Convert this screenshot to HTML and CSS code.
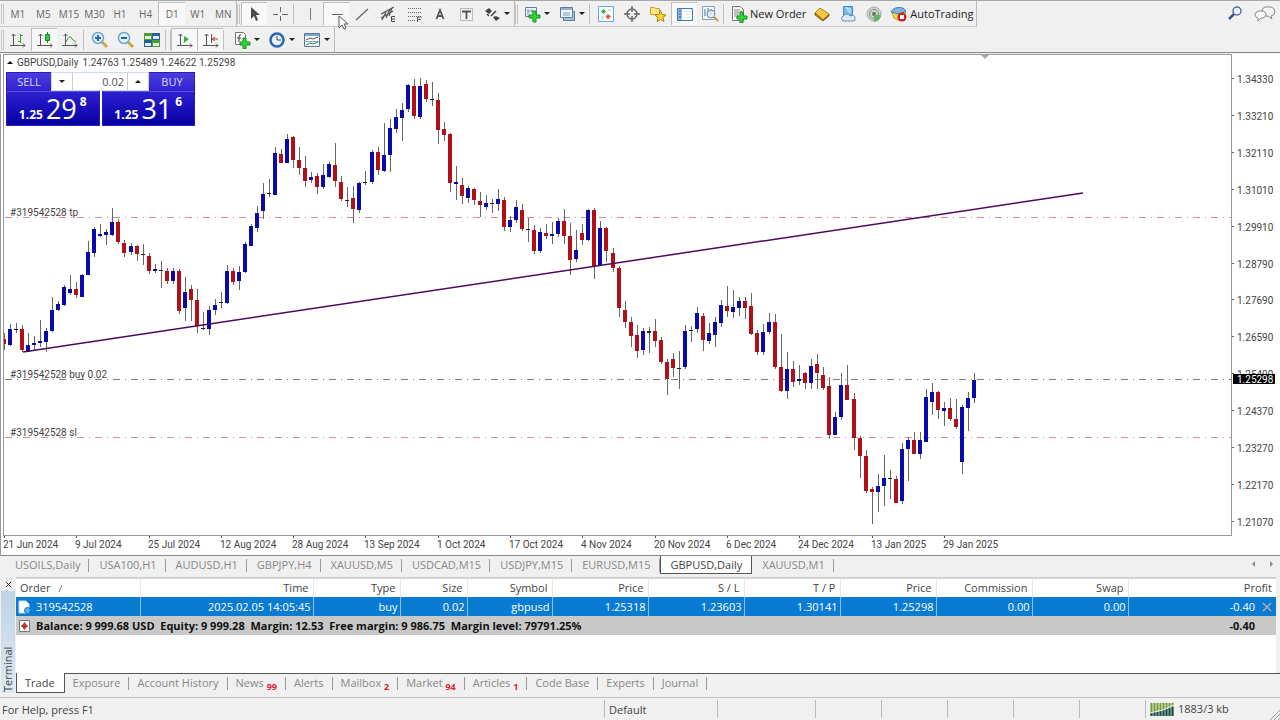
FILE: index.html
```html
<!DOCTYPE html>
<html lang="en">
<head>
<meta charset="utf-8">
<title>GBPUSD,Daily</title>
<link rel="stylesheet" href="styles.css">
</head>
<body>
<svg class="pointer" width="12" height="18" viewBox="0 0 12 18" aria-hidden="true"><path d="M1 1v12l3-3 2 4 2-1-2-4h4z" fill="#fff" stroke="#555" stroke-width="1"/></svg>

<header class="toolbars">
  <div class="toolbar">
    <div class="group frames">
      <span class="grip"></span>
      <button>M1</button><button>M5</button><button>M15</button><button>M30</button><button>H1</button><button>H4</button><button class="pressed">D1</button><button>W1</button><button>MN</button>
    </div>
    <div class="group">
      <span class="grip"></span>
      <button class="tool pressed" aria-label="Cursor"><svg width="18" height="18"><path d="M5 2v12l3-3 2 5 2-1-2-5h4z" fill="#4a4a4a"/></svg></button>
      <button class="tool" aria-label="Crosshair"><svg width="18" height="18"><path d="M9.500 2v5M9.500 11v5M2 9.500h5M11 9.500h6" stroke="#666" fill="none"/></svg></button>
      <span class="sep"></span>
      <button class="tool" aria-label="Vertical line"><svg width="18" height="18"><path d="M9.500 3v12" stroke="#777" fill="none"/></svg></button>
      <button class="tool pressed" aria-label="Horizontal line"><svg width="18" height="18"><path d="M4 9.500h11" stroke="#666" fill="none"/></svg></button>
      <button class="tool" aria-label="Trendline"><svg width="18" height="18"><path d="M3 15L15 4" stroke="#666" stroke-width="1.300" fill="none"/></svg></button>
      <button class="tool" aria-label="Equidistant channel"><svg width="18" height="18"><path d="M2 9L15 2M2 13L14 6M3 15l4-8M7 13l4-9M10 11l3-8" stroke="#555" stroke-width="1.200" fill="none"/><path d="M16 11.500h-3.500v5H16M13 14h3" stroke="#444" fill="none"/></svg></button>
      <button class="tool" aria-label="Fibonacci"><svg width="18" height="18"><path d="M3 3.500h13M3 7.500h13M3 11.500h13M3 15.500h8" stroke="#666" stroke-dasharray="1 1" fill="none"/><path d="M12.500 17v-5h4M12.500 14.500h3" stroke="#555" fill="none"/></svg></button>
      <button class="tool" aria-label="Text"><svg width="18" height="18"><path d="M5.500 14L9 5L12.500 14M7 11h4" stroke="#555" stroke-width="1.800" fill="none"/></svg></button>
      <button class="tool" aria-label="Text label"><svg width="18" height="18"><path d="M3.500 3.500h12v12h-12z" stroke="#888" stroke-dasharray="1 1" fill="none"/><path d="M5 6.500h9M9.500 6v8" stroke="#555" stroke-width="1.800" fill="none"/></svg></button>
      <button class="tool drop" aria-label="Arrows"><svg width="18" height="18"><path d="M2 6l4-3 3 3-3 3zM10 12l3-1 4 2-4 3z" fill="#444"/><path d="M4 9l2 2M8 11l5-5" stroke="#444" stroke-width="1.500" fill="none"/></svg><i class="caret"></i></button>
    </div>
    <div class="group standard">
      <span class="grip"></span>
      <button class="tool drop" aria-label="New chart"><svg width="18" height="18"><path d="M2.500 2.500h11v9h-11z" fill="#eef5fb" stroke="#5b87ad"/><path d="M5 4v6M4 6h6M9 4v4" stroke="#7b9cba" fill="none"/><path d="M10 6h3v4h4v3h-4v4h-3v-4H6v-3h4z" fill="#35d53c" stroke="#14921a"/></svg><i class="caret"></i></button>
      <button class="tool drop" aria-label="Profiles"><svg width="18" height="18"><path d="M5.500 6.500h11v9h-11z" fill="#a8c4dd" stroke="#5b7fa3"/><path d="M2.500 2.500h12v10h-12z" fill="#eef5fb" stroke="#5b7fa3"/><path d="M3 3h11v2H3z" fill="#8fb2d4"/><path d="M5 8h7M5 10h7" stroke="#7b9cba" fill="none"/></svg><i class="caret"></i></button>
      <span class="sep"></span>
      <button class="tool" aria-label="Market Watch"><svg width="18" height="18"><path d="M1.500 1.500h15v15h-15z" fill="#f8fcff" stroke="#69a9d6"/><path d="M4 6.500L6.500 4 9 6.500 6.500 9z" fill="#3cae3c"/><path d="M8.500 11.500L11 9l3 2.500-3 3z" fill="#e0603c"/><path d="M11 5h3M4 12h3M4 14h2" stroke="#b5cbd6" fill="none"/></svg></button>
      <button class="tool" aria-label="Data Window"><svg width="18" height="18"><circle cx="9" cy="9" r="5" fill="none" stroke="#666" stroke-width="1.500"/><path d="M9 1v6M9 11v6M1 9h6M11 9h6" stroke="#666" stroke-width="1.500" fill="none"/></svg></button>
      <button class="tool" aria-label="Navigator"><svg width="18" height="18"><path d="M1.500 2.500h4l1 1h4v6h-9z" fill="#fbe58a" stroke="#c9a227"/><path d="M11.500 5.500l1.500 4 4 .5-3 2.500 1 4-3.500-2-3.500 2 1-4-3-2.500 4-.5z" fill="#ffd530" stroke="#a98512"/></svg></button>
      <button class="tool pressed" aria-label="Terminal"><svg width="18" height="18"><path d="M1.500 3.500h15v12h-15z" fill="#fff" stroke="#3f78b5"/><path d="M2 4h4v11H2z" fill="#8fbbe4"/><path d="M3 6h2M3 9h2M3 12h2" stroke="#174f8b" fill="none"/><path d="M8 6.500h7M8 9.500h7M8 12.500h7" stroke="#dce9f5" fill="none"/></svg></button>
      <button class="tool" aria-label="Strategy Tester"><svg width="18" height="18"><path d="M1.500 1.500h12v13h-12z" fill="#f0f5fa" stroke="#8aa0b5"/><path d="M4 4v7M7 3v6M10 4v6" stroke="#4776a4" fill="none"/><circle cx="10" cy="9" r="4" fill="#dcebf7" fill-opacity=".8" stroke="#6d8ba8"/><path d="M13 12l4 4" stroke="#c6a13b" stroke-width="2"/></svg></button>
      <span class="sep"></span>
      <button class="tool label" aria-label="New Order"><svg width="18" height="18"><path d="M2.500 1.500h8l3 3v11h-11z" fill="#fafafa" stroke="#777"/><path d="M4 5h6M4 7h8M4 9h5M4 11h4" stroke="#888" fill="none"/><path d="M10 7h3v4h4v3h-4v4h-3v-4H7v-3h3z" fill="#35d53c" stroke="#14921a"/></svg><span>New Order</span></button>
      <button class="tool" aria-label="MetaEditor"><svg width="18" height="18"><path d="M2 8l5-5 9 6-6 6z" fill="#f6c945" stroke="#b0801a"/><path d="M2 8v2l8 6 6-5V9l-6 6z" fill="#c68e1c" stroke="#8d6413"/></svg></button>
      <button class="tool" aria-label="Virtual hosting"><svg width="18" height="18"><path d="M4.500 1.500h9v9h-9z" fill="#74b9ea" stroke="#3b8cc8"/><path d="M6 3h3v4M11 3v5" stroke="#e8f5ff" fill="none"/><path d="M4 16a3 3 0 0 1 0-5q4-4 7 0 5-2 5 2 1 3-2 3z" fill="#dfe9f3" stroke="#6f8eab"/></svg></button>
      <button class="tool" aria-label="Signals"><svg width="18" height="18"><circle cx="9" cy="9" r="7" fill="#cdd3cd" stroke="#aaa"/><circle cx="9" cy="9" r="4.500" fill="none" stroke="#879087"/><circle cx="9" cy="9" r="2" fill="#5b7b5b"/><path d="M9 10v7a8 8 0 0 0 7-7" fill="#68b26b"/></svg></button>
      <button class="tool label" aria-label="AutoTrading"><svg width="18" height="18"><path d="M2 7h14l-6 9-6-3z" fill="#f6d34c" stroke="#c49a24"/><path d="M1 7q3-6 12-4l3 3-7 3z" fill="#7db7df" stroke="#3f7fae"/><circle cx="12" cy="12" r="4.500" fill="#cf1f1f"/><path d="M10 10h4v4h-4z" fill="#fff"/></svg><span>AutoTrading</span></button>
    </div>
    <div class="corner">
      <button class="tool" aria-label="Search"><svg width="18" height="18"><circle cx="11" cy="6" r="4" fill="#eef4ff" stroke="#4c6fae" stroke-width="1.500"/><path d="M8 9l-5 5" stroke="#3355a0" stroke-width="2.500"/></svg></button>
      <button class="tool" aria-label="Chat"><svg width="22" height="18"><path d="M11 2h6q4 1 4 4.500T17 11l1 3-4-3h-3q-3-1-3-4.500T11 2z" fill="#f4f4f4" stroke="#888"/><path d="M5 6h4q3 1 3 3.500T9 13H7l-3 3V13q-3-1-3-3.500T5 6z" fill="#fafafa" stroke="#888"/></svg></button>
    </div>
  </div>

  <div class="toolbar">
    <div class="group charts">
      <span class="grip"></span>
      <button class="tool" aria-label="Bar chart"><svg width="18" height="18"><path d="M4.500 3v12M1 14.500h15M2.500 5l2-2 2 2M14 12.500l2 2-2 2" stroke="#555" fill="none"/><path d="M11.500 3v9M9 10.500h2M12 4.500h2" stroke="#3a9a3a" fill="none"/></svg></button>
      <button class="tool pressed" aria-label="Candlesticks"><svg width="18" height="18"><path d="M4.500 3v12M1 14.500h15M2.500 5l2-2 2 2M14 12.500l2 2-2 2" stroke="#555" fill="none"/><path d="M11.500 1v11" stroke="#287c28"/><path d="M9.500 3.500h4v6h-4z" fill="#2fd03c" stroke="#1c8b25"/></svg></button>
      <button class="tool" aria-label="Line chart"><svg width="18" height="18"><path d="M4.500 3v12M1 14.500h15M2.500 5l2-2 2 2M14 12.500l2 2-2 2" stroke="#555" fill="none"/><path d="M5 11q4-9 6-3l4 3" stroke="#3a9a3a" fill="none"/></svg></button>
      <span class="sep"></span>
      <button class="tool" aria-label="Zoom in"><svg width="18" height="18"><path d="M11 11l5 5" stroke="#cfa83b" stroke-width="3"/><circle cx="7" cy="7" r="5.500" fill="#e2f1fb" stroke="#6fa5d2" stroke-width="1.500"/><path d="M4 7h6M7 4v6" stroke="#2567a8" stroke-width="2"/></svg></button>
      <button class="tool" aria-label="Zoom out"><svg width="18" height="18"><path d="M11 11l5 5" stroke="#cfa83b" stroke-width="3"/><circle cx="7" cy="7" r="5.500" fill="#e2f1fb" stroke="#6fa5d2" stroke-width="1.500"/><path d="M4 7h6" stroke="#2567a8" stroke-width="2"/></svg></button>
      <button class="tool" aria-label="Tile windows"><svg width="18" height="18"><path d="M1 2h8v7H1zM9 9h8v7H9z" fill="#4a9d2e"/><path d="M9 2h8v7H9zM1 9h8v7H1z" fill="#2a5ca0"/><path d="M2 5h6v3H2zM10 5h6v3h-6zM2 12h6v3H2zM10 12h6v3h-6z" fill="#e0f0e4"/></svg></button>
      <span class="sep wide"></span>
      <button class="tool pressed" aria-label="Auto scroll"><svg width="18" height="18"><path d="M4.500 3v12M1 14.500h15M2.500 5l2-2 2 2M14 12.500l2 2-2 2" stroke="#555" fill="none"/><path d="M8 5l5 3-5 4z" fill="#2fb53c"/></svg></button>
      <button class="tool pressed" aria-label="Chart shift"><svg width="18" height="18"><path d="M4.500 3v12M1 14.500h15M2.500 5l2-2 2 2M14 12.500l2 2-2 2M9.500 3v9" stroke="#555" fill="none"/><path d="M16 8h-5M13 6l-3 2 3 2" stroke="#b03a2a" fill="none"/></svg></button>
      <span class="sep wide single"></span>
      <button class="tool drop" aria-label="Indicators"><svg width="18" height="18"><path d="M2.500 1.500h8l2 2v10h-10z" fill="#fafafa" stroke="#777"/><path d="M8 4q-2-1-2 2v5M4 7h4" stroke="#444" fill="none"/><path d="M10 7h3v4h4v3h-4v4h-3v-4H7v-3h3z" fill="#35d53c" stroke="#14921a"/></svg><i class="caret"></i></button>
      <button class="tool drop" aria-label="Periods"><svg width="18" height="18"><circle cx="9" cy="9" r="6.500" fill="#e6f2fc" stroke="#2b67ae" stroke-width="2.500"/><path d="M9 5v4h4" stroke="#444" fill="none"/></svg><i class="caret"></i></button>
      <button class="tool drop" aria-label="Templates"><svg width="18" height="18"><path d="M1.500 2.500h15v13h-15z" fill="#f7fbff" stroke="#56799d"/><path d="M2 3h14v2H2z" fill="#7fa8d0"/><path d="M3 9l4-2 3 1 5-2" stroke="#555" fill="none"/><path d="M2 10.500h14" stroke="#8aa9c8"/><path d="M3 14l4-2 3 1 5-2" stroke="#3a8d3a" fill="none"/></svg><i class="caret"></i></button>
    </div>
  </div>
</header>

<main class="window">
  <section class="plot">
    <svg class="canvas" id="plot" width="100%" height="480" role="img" aria-label="GBPUSD daily candlestick chart"></svg>
    <div class="quote"><i class="up"></i><span>GBPUSD,Daily</span><span>1.24763 1.25489 1.24622 1.25298</span></div>
    <div class="deal">
      <button class="side sell"><span class="verb">SELL</span><span class="price"><small>1.25</small><b>29</b><sup>8</sup></span></button>
      <button class="side buy"><span class="verb">BUY</span><span class="price"><small>1.25</small><b>31</b><sup>6</sup></span></button>
      <div class="volume">
        <button aria-label="Decrease volume"><i class="caret"></i></button>
        <input type="text" value="0.02" aria-label="Volume">
        <button aria-label="Increase volume"><i class="up"></i></button>
      </div>
    </div>
  </section>
  <svg class="canvas" id="prices" width="48" height="480" role="img" aria-label="Price scale"></svg>
  <svg class="canvas dates" id="dates" width="100%" height="19" role="img" aria-label="Time scale"></svg>
</main>

<nav class="tabs sheets">
  <button>USOILS,Daily</button><button>USA100,H1</button><button>AUDUSD,H1</button><button>GBPJPY,H4</button><button>XAUUSD,M5</button><button>USDCAD,M15</button><button>USDJPY,M15</button><button>EURUSD,M15</button><button class="active">GBPUSD,Daily</button><button>XAUUSD,M1</button>
  <span class="scroll"><i class="left"></i><i class="right"></i></span>
</nav>

<section class="terminal">
  <aside class="spine">
    <button aria-label="Close"><svg width="7" height="7"><path d="M1 1l5 5M6 1L1 6" stroke="#333" fill="none"/></svg></button>
    <span>Terminal</span>
  </aside>
  <div class="pane">
    <table>
      <colgroup><col class="c-order"><col class="c-time"><col class="c-type"><col class="c-size"><col class="c-symbol"><col class="c-num"><col class="c-num"><col class="c-num"><col class="c-num"><col class="c-num"><col class="c-num"><col></colgroup>
      <thead>
        <tr><th>Order <svg width="5" height="7"><path d="M1 7L4 0" stroke="#888" fill="none"/></svg></th><th>Time</th><th>Type</th><th>Size</th><th>Symbol</th><th>Price</th><th>S / L</th><th>T / P</th><th>Price</th><th>Commission</th><th>Swap</th><th>Profit</th></tr>
      </thead>
      <tbody>
        <tr class="order"><td><span class="lead"><svg width="13" height="14"><path d="M1 1h7l3 3v9H1z" fill="#fff" stroke="#cde"/><circle cx="9.500" cy="10.500" r="3" fill="#4db5ef" stroke="#1d6ca8"/></svg>319542528</span></td><td>2025.02.05 14:05:45</td><td>buy</td><td>0.02</td><td>gbpusd</td><td>1.25318</td><td>1.23603</td><td>1.30141</td><td>1.25298</td><td>0.00</td><td>0.00</td><td><span class="profit">-0.40<button aria-label="Close order"><svg width="10" height="10"><path d="M1 1l8 8M9 1L1 9" stroke="#b9a9a4" stroke-width="1.500" fill="none"/></svg></button></span></td></tr>
        <tr class="balance"><td colspan="11"><span class="lead"><svg width="13" height="14"><path d="M1.500 1.500h10v11h-10z" fill="#fff" stroke="#777"/><path d="M6.500 3l3 4-3 4-3-4z" fill="#c33"/><path d="M3 7h7" stroke="#833"/></svg><span>Balance: 9 999.68 USD&nbsp; Equity: 9 999.28&nbsp; Margin: 12.53&nbsp; Free margin: 9 986.75&nbsp; Margin level: 79791.25%</span></span></td><td><span class="profit total">-0.40</span></td></tr>
      </tbody>
    </table>
    <nav class="tabs panels">
      <button class="active">Trade</button><button>Exposure</button><button>Account History</button><button>News <em>99</em></button><button>Alerts</button><button>Mailbox <em>2</em></button><button>Market <em>94</em></button><button>Articles <em>1</em></button><button>Code Base</button><button>Experts</button><button>Journal</button>
    </nav>
  </div>
</section>

<footer class="status">
  <span class="help">For Help, press F1</span>
  <span class="cell w-profile">Default</span>
  <span class="cell w-date"></span>
  <span class="cell w-open"></span>
  <span class="cell w-open"></span>
  <span class="cell w-open"></span>
  <span class="cell w-open"></span>
  <span class="cell w-open"></span>
  <span class="cell traffic"><svg width="24" height="13"><path d="M1.500 0v13M4.500 0v13M7.500 0v13M10.500 0v13M13.500 0v13M16.500 0v13M19.500 0v13M22.500 0v13" stroke="#6f9a2c" stroke-width="2"/><path d="M1.500 10v3M4.500 9v4M7.500 9v4M10.500 8v5M13.500 7v6M16.500 6v7M19.500 5v8M22.500 4v9" stroke="#1d4960" stroke-width="2"/><path d="M0 10Q14 8 24 2" stroke="#eee" fill="none"/></svg>1883/3 kb</span>
  <svg class="resize" width="10" height="10"><path d="M0 10L10 0M4 10l6-6M8 10l2-2" stroke="#999" fill="none"/></svg>
</footer>
<script src="chart.js"></script>
</body>
</html>
```
FILE: styles.css
```css
* { box-sizing: border-box; }
body {
  margin: 0;
  min-height: 100vh;
  display: flex;
  flex-direction: column;
  background: #f0f0f0;
  color: #444;
  font-family: "Open Sans", "Noto Sans", sans-serif;
  font-size: 11px;
  line-height: 16px;
}
button { margin: 0; padding: 0; border: 0; background: none; color: inherit; font: inherit; }
svg { display: block; flex: none; }
.pointer { position: absolute; left: 338px; top: 15px; z-index: 2; }

/* toolbars */
.toolbars { border-top: 1px solid #a8a8a8; border-bottom: 1px solid #8c8488; }
.toolbar { display: flex; height: 26px; }
.toolbar + .toolbar { height: 25px; }
.group { display: flex; align-items: center; border-right: 1px solid #bbb; border-bottom: 1px solid #ccc; }
.group.charts { padding-left: 1px; border-bottom: 0; }
.grip { flex: none; width: 3px; height: 20px; margin-right: 1px; border: solid #c4c4c4; border-width: 0 1px; }
.frames { flex: none; width: 237px; padding-left: 1px; font-size: 10px; color: #666; }
.frames button { flex: 1; height: 23px; }
.tool { flex: none; width: 26px; height: 23px; display: flex; align-items: center; justify-content: center; }
.pressed { background: #f8f8f8; border: solid #bdbdbd; border-width: 1px 0 0 1px; }
.drop { width: 35px; justify-content: flex-start; padding-left: 4px; gap: 3px; }
.label { width: auto; padding: 0 3px; gap: 2px; color: #222; }
.sep { flex: none; width: 4px; height: 20px; border-left: 1px solid #c0c0c0; }
.sep.wide { width: 6px; border-right: 1px solid #c0c0c0; }
.sep.single { border-right: 0; }
.corner { display: flex; align-items: center; gap: 4px; margin-left: auto; padding-right: 2px; }
.caret, .up { flex: none; width: 0; height: 0; border: 3px solid transparent; }
.caret { border-top-color: #222; border-bottom: 0; }
.up { border-bottom-color: #111; border-top: 0; }

/* chart window */
.window {
  display: grid;
  grid-template-columns: 1fr 48px;
  margin-top: 1px;
  padding-left: 2px;
  border-left: 1px solid #999;
  border-bottom: 1px solid #888;
  background: #fff;
}
.plot { position: relative; border: 1px solid #999; overflow: hidden; }
.canvas, .quote { font-family: Roboto, "Noto Sans", sans-serif; font-size: 10px; }
.canvas { fill: #444; }
.dates { grid-column: 1 / -1; }
.quote { position: absolute; left: 3px; top: 1px; display: flex; align-items: center; gap: 4px; line-height: 13px; }
.deal { position: absolute; left: 2px; top: 17px; width: 189px; display: grid; grid-template-columns: 1fr 1fr; gap: 2px; color: #fff; }
.side { height: 54px; display: flex; flex-direction: column; background: linear-gradient(#4b3ce0, #2418c8 50%, #0500a0); border: 1px solid #2a1cb8; }
.verb { width: 44px; height: 18px; line-height: 18px; text-align: center; color: #dcd8ff; }
.buy .verb { align-self: flex-end; }
.price { align-self: stretch; display: flex; align-items: baseline; justify-content: center; gap: 3px; height: 34px; line-height: 34px; border-top: 1px solid #5a50e0; }
.price small { font-size: 12px; font-weight: 700; }
.price b { font-size: 27px; font-weight: 400; }
.price sup { align-self: flex-start; font-size: 12px; font-weight: 700; line-height: 20px; }
.volume { position: absolute; left: 45px; top: 0; width: 98px; height: 19px; display: flex; background: #fff; border: 1px solid #cfd8ee; }
.volume button { width: 20px; display: flex; align-items: center; justify-content: center; }
.volume input { flex: 1; min-width: 0; margin: 0; padding: 0 3px; border: solid #ccc; border-width: 0 1px; background: #fff; color: #555; font: inherit; text-align: right; }

/* tab strips */
.tabs { display: flex; align-items: flex-start; color: #888; }
.tabs button { position: relative; padding: 0 9px 0 10px; height: 18px; white-space: nowrap; }
.tabs button:not(.active)::after { content: ""; position: absolute; right: 0; top: 3px; height: 13px; border-right: 1px solid #999; }
.tabs .active { background: #fff; color: #444; border: 1px solid #555; border-top: 0; }
.sheets { height: 21px; padding-left: 5px; }
.scroll { display: flex; gap: 15px; margin: 5px 7px 0 auto; }
.left, .right { width: 0; height: 0; border: 3px solid transparent; }
.left { border-right-color: #888; border-left: 0; }
.right { border-left-color: #888; border-right: 0; }

/* terminal */
.terminal { flex: 1; display: flex; border-bottom: 1px solid #c0c0c0; }
.spine { width: 16px; display: flex; flex-direction: column; align-items: center; background: #f0f0f0; }
.spine button { height: 14px; display: flex; align-items: center; }
.spine span { flex: 1; width: 14px; padding-top: 1px; margin-bottom: 4px; background: linear-gradient(#dce9f2, #bfd3e2); writing-mode: vertical-rl; transform: rotate(180deg); line-height: 14px; }
.pane { flex: 1; min-width: 0; display: flex; flex-direction: column; margin-right: 4px; border-top: 2px solid #d4d4d4; background: #fff; }
table { width: 100%; table-layout: fixed; border-collapse: collapse; }
.c-order { width: 124px; } .c-time { width: 173px; } .c-type { width: 87px; } .c-size { width: 67px; } .c-symbol { width: 85px; } .c-num { width: 96px; }
th, td { height: 19px; padding: 0; text-align: right; white-space: nowrap; }
th { height: 18px; padding-right: 4px; font-weight: 400; border-right: 1px solid #e8e8e8; }
td { padding-right: 2px; border-right: 1px solid #8fc0ea; }
th:first-child, td:first-child { text-align: left; }
th:last-child, td:last-child { border-right: 0; }
th:first-child { padding-left: 4px; }
th svg { display: inline-block; margin-left: 5px; }
.order { background: #0a7bd3; color: #fff; }
.balance { background: #c8c8c8; color: #111; font-weight: 700; }
.balance td { border-right: 0; }
.lead { display: flex; align-items: center; gap: 5px; padding-left: 2px; }
.profit { display: flex; align-items: center; justify-content: flex-end; gap: 7px; padding-right: 2px; }
.total { padding-right: 19px; }
.panels { height: 24px; margin: auto -4px 0 0; border-top: 1px solid #555; background: #f0f0f0; }
.panels button { padding-left: 8px; }
.panels .active { margin-top: -1px; height: 20px; padding-top: 1px; }
.panels em { position: relative; top: 3px; color: #d23; font-style: normal; font-weight: 700; font-size: 9px; }

/* status bar */
.status { display: flex; align-items: center; height: 22px; line-height: 20px; }
.help { flex: 1; padding: 2px 0 0 2px; }
.cell { height: 18px; padding-left: 4px; border-left: 1px solid #bbb; }
.w-profile { width: 113px; } .w-date { width: 98px; } .w-open { width: 66px; }
.traffic { display: flex; align-items: center; gap: 4px; width: 125px; }
.resize { align-self: flex-end; }
```
FILE: chart.js
```js
// Each bar: colour (b = up, r = down, k = unchanged), high, body top, body bottom, low.
const bars = `r333,339,344,350 b324,329,345,346 k323,329,330,333 r325,329,350,352 b333,345,352,352 b336,343,345,350 b320,341,343,347 b328,331,342,352
b297,310,331,332 b301,304,310,311 b285,287,305,306 b275,289,293,295 r282,289,295,298 b274,275,297,297 b241,252,275,275 b227,229,253,257
b224,234,236,237 b229,232,235,245 b208,222,235,236 r219,222,242,244 r240,243,253,257 b243,246,252,255 r245,246,254,261 k244,254,255,265
r253,256,271,274 b264,269,271,273 k261,270,271,288 r268,271,281,284 b268,271,281,284 r269,271,311,314 b277,292,308,321 r285,289,300,321
r289,300,326,333 k312,328,329,330 b306,310,329,335 b299,305,310,315 k292,302,303,308 b265,271,303,304 r268,271,282,285 b266,272,281,290
b242,244,272,273 b224,226,246,246 b206,213,228,232 b183,194,211,219 k179,193,194,197 b147,153,195,195 r149,154,163,163 b134,139,163,163
r136,137,160,168 r147,160,168,175 r156,168,181,187 b172,177,180,183 r173,176,187,194 b164,175,187,189 b162,164,177,178 r143,165,181,187
r176,182,199,201 k187,200,201,207 r186,198,209,223 b182,183,210,213 k171,182,183,185 b150,152,182,184 r147,152,170,175 b123,155,171,172
b119,128,155,172 b109,117,129,133 b103,110,118,141 b84,85,109,112 r79,86,116,119 b78,86,117,119 r80,84,99,102 k82,99,100,106
r93,100,130,144 r122,129,135,141 r133,134,183,192 b166,182,184,200 r178,185,196,204 b186,188,198,203 r188,189,200,205 r192,201,205,217
b195,203,207,210 k199,203,204,213 b189,199,204,211 r197,200,227,231 b216,220,227,232 b200,207,220,223 r204,210,229,231 k218,229,230,242
r225,230,251,254 b228,232,251,253 r224,233,236,239 b222,234,236,244 b218,221,234,237 r209,221,236,244 r223,236,260,275 b230,250,259,262
r224,233,240,245 b209,210,240,241 r208,210,266,279 b221,228,265,266 r227,228,251,262 r248,253,268,272 r266,268,308,317 r301,310,322,328
r317,322,336,347 r325,335,351,358 b328,331,350,355 k327,331,333,353 r319,331,341,347 r337,340,362,364 r359,362,379,395 r353,359,368,377
k351,368,369,389 b325,331,367,369 k326,330,331,342 b307,313,329,333 r313,316,340,351 b323,333,341,344 b317,322,335,347 b300,305,323,327
r286,306,311,317 b290,307,312,318 b297,301,308,316 r297,301,308,319 r293,306,334,335 r330,333,352,355 b324,332,352,355 b313,322,332,334
r314,322,367,369 r334,367,391,392 b352,369,391,399 r361,369,382,387 b365,379,381,385 r372,373,383,389 b359,366,383,389 r354,364,373,389
r367,375,388,390 r377,386,435,439 b412,417,435,435 b373,385,417,420 r365,385,400,400 r393,399,438,450 r436,438,456,478 r450,456,491,493
r487,489,492,524 b474,486,492,512 b455,478,486,506 k470,478,479,499 r476,479,503,503 b443,449,501,504 b437,440,449,481 r432,440,454,454
b432,440,454,459 b389,397,442,442 b383,392,402,415 r391,392,410,419 b402,408,411,426 r398,408,419,421 r399,419,427,429 b405,407,462,474
b392,398,408,431 b373,380,398,403`.split(/\s+/);
const fills = { b: "#0a0aa8", r: "#b01018", k: "#222" };
const top0 = 55, step = 970 / 161;

let out = "";
const level = (y, colour, label) => {
  out += `<path d="M1 ${y - top0 + 0.5}H4000" stroke="${colour}" stroke-dasharray="7 5 1 5"/>`;
  out += `<text x="6" y="${y - top0 - 1}">${label}</text>`;
};
level(217, "#d98c98", "#319542528 tp");
level(379, "#6f8574", "#319542528 buy 0.02");
level(437, "#d98c98", "#319542528 sl");

bars.forEach((bar, i) => {
  const [high, open, close, low] = bar.slice(1).split(",").map(v => v - top0);
  const x = Math.round(i * step), fill = fills[bar[0]];
  out += `<rect x="${x}" y="${high}" width="1" height="${low - high}" fill="#666"/>`;
  out += `<rect x="${x - 2}" y="${open}" width="4" height="${close - open}" fill="${fill}"/>`;
});
out += `<path d="M19 297L1079 138" stroke="#4d0a5c" stroke-width="1.5" fill="none"/>`;
out += `<path d="M977 0h8l-4 4z" fill="#aaa"/>`;
document.getElementById("plot").innerHTML = out;

const prices = ["1.34330", "1.33210", "1.32110", "1.31010", "1.29910", "1.28790", "1.27690", "1.26590", "1.25490", "1.24370", "1.23270", "1.22170", "1.21070"];
out = "";
prices.forEach((price, i) => {
  const y = Math.round(25 + i * 36.9);
  out += `<path d="M0 ${y - 0.5}h2" stroke="#666"/><text x="5" y="${y + 4}">${price}</text>`;
});
out += `<rect x="1" y="320" width="42" height="10" fill="#000"/><text x="5" y="329" fill="#fff">1.25298</text>`;
document.getElementById("prices").innerHTML = out;

const dates = ["21 Jun 2024", "9 Jul 2024", "25 Jul 2024", "12 Aug 2024", "28 Aug 2024", "13 Sep 2024", "1 Oct 2024", "17 Oct 2024", "4 Nov 2024", "20 Nov 2024", "6 Dec 2024", "24 Dec 2024", "13 Jan 2025", "29 Jan 2025"];
document.getElementById("dates").innerHTML = dates.map((date, i) => {
  const x = Math.round(i * step * 12);
  return `<path d="M${x + 1.5} 0v2" stroke="#555"/><text x="${x}" y="12">${date}</text>`;
}).join("");
```
